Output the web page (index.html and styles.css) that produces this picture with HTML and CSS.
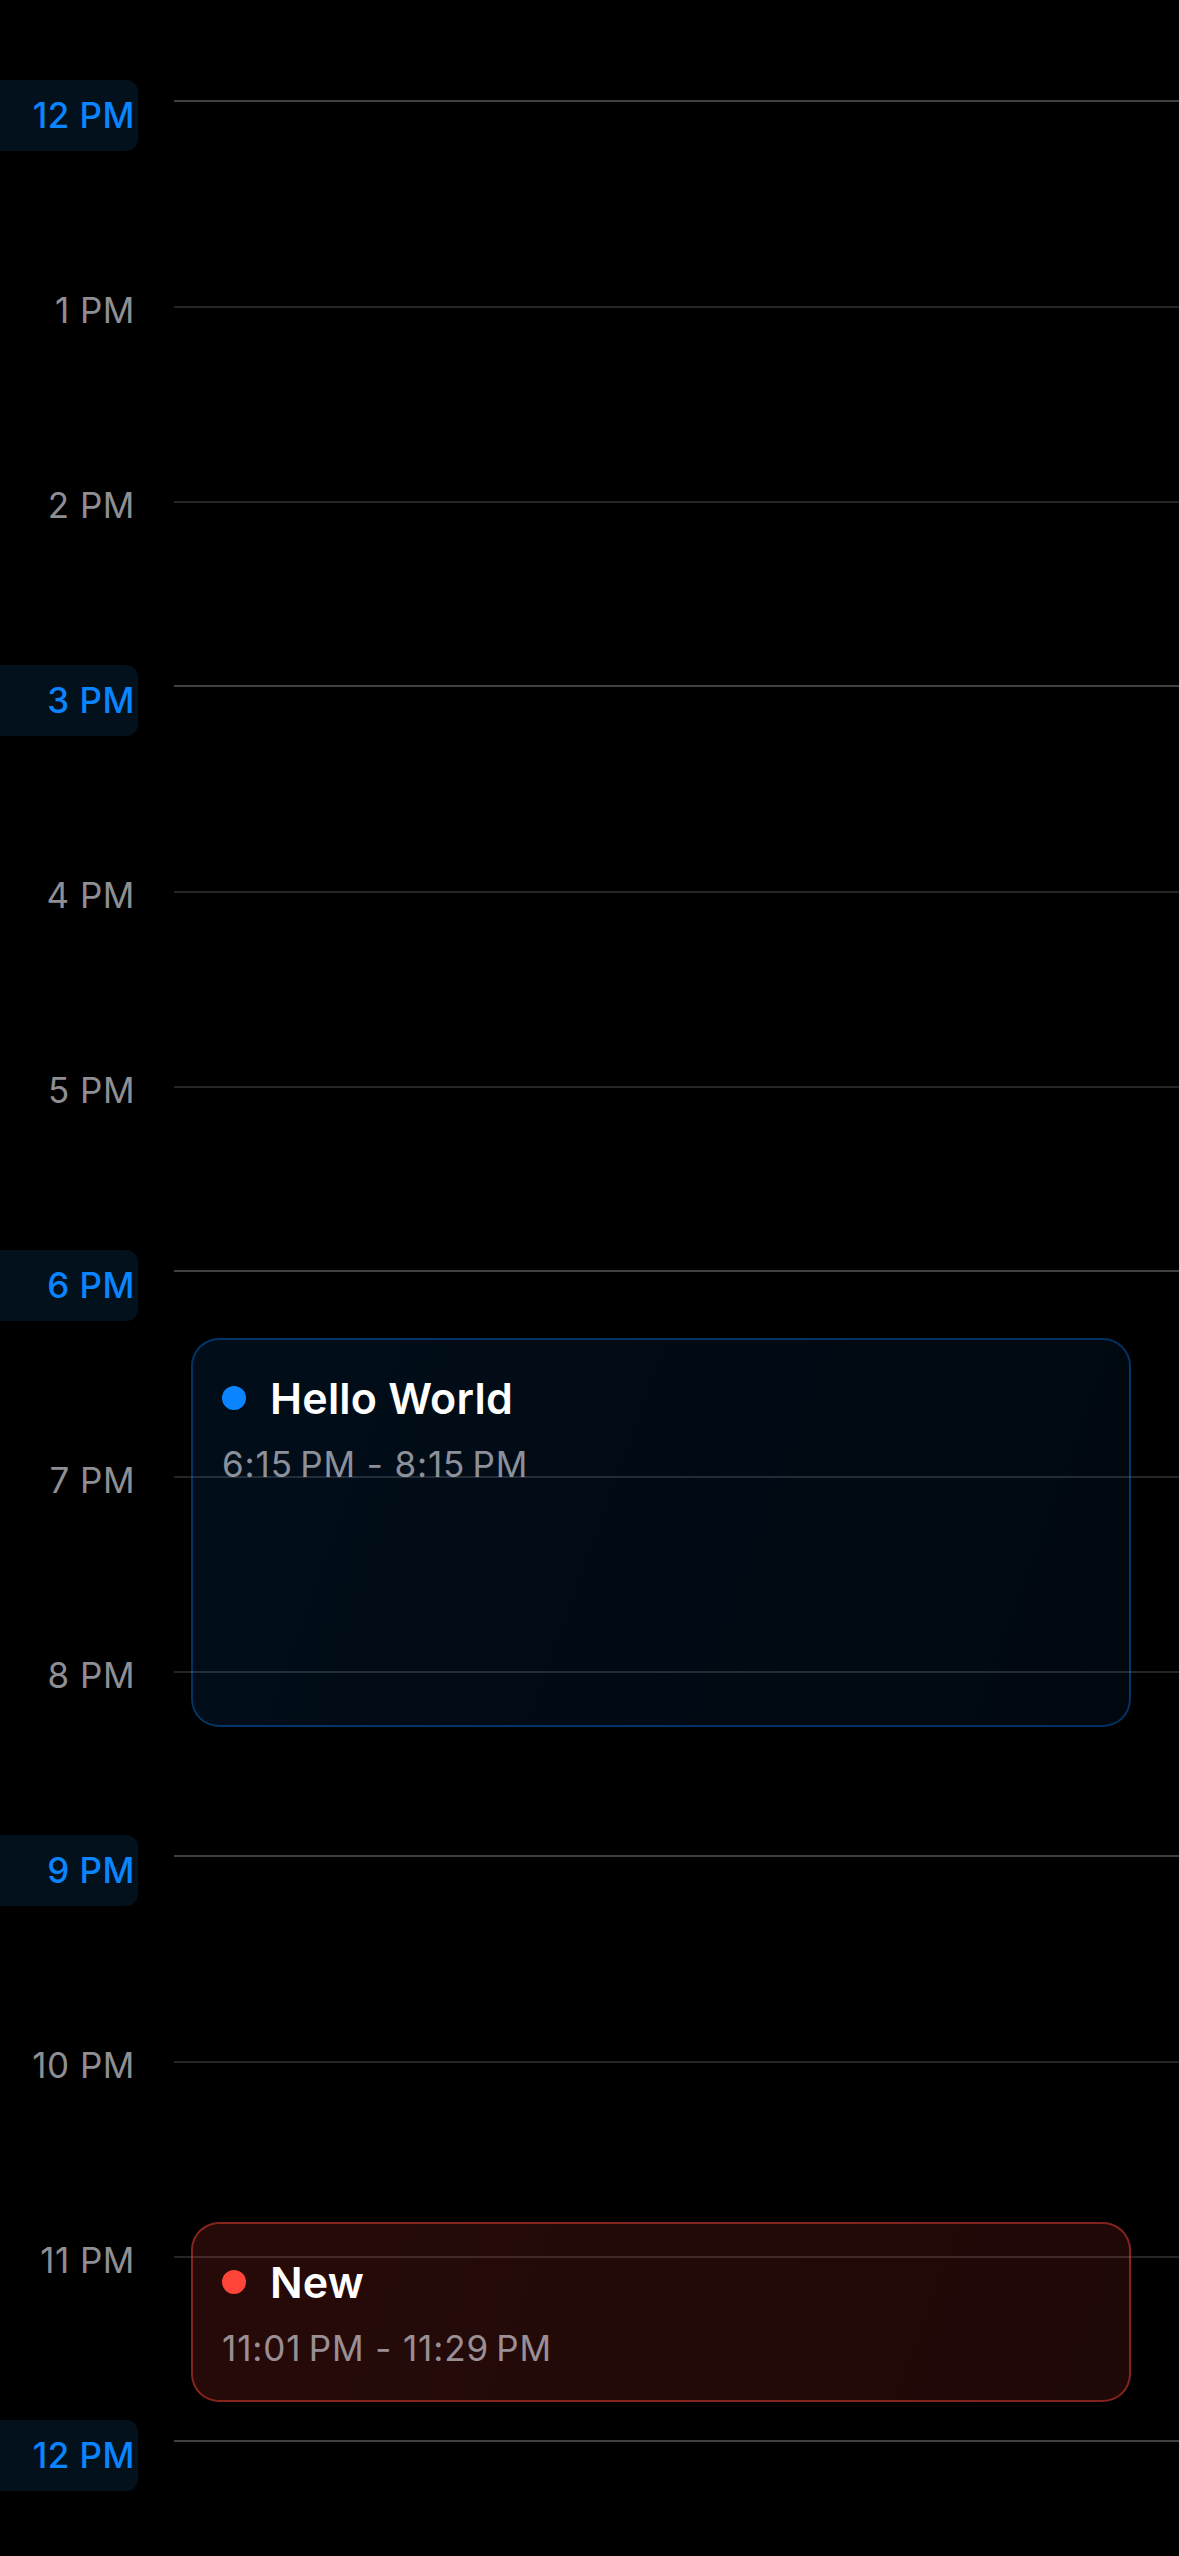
FILE: index.html
```html
<!DOCTYPE html>
<html lang="en">
<head>
  <meta charset="UTF-8">
  <title>Day</title>
  <meta name="viewport" content="width=device-width, initial-scale=1.0">
  <link rel="stylesheet" href="styles.css">
</head>
<body>

  <div class="timeline">
    <div class="hour major"><div class="label">12 PM</div><div class="rule"></div></div>
    <div class="hour"><div class="label">1 PM</div><div class="rule"></div></div>
    <div class="hour"><div class="label">2 PM</div><div class="rule"></div></div>
    <div class="hour major"><div class="label">3 PM</div><div class="rule"></div></div>
    <div class="hour"><div class="label">4 PM</div><div class="rule"></div></div>
    <div class="hour"><div class="label">5 PM</div><div class="rule"></div></div>
    <div class="hour major"><div class="label">6 PM</div><div class="rule"></div></div>
    <div class="hour"><div class="label">7 PM</div><div class="rule"></div></div>
    <div class="hour"><div class="label">8 PM</div><div class="rule"></div></div>
    <div class="hour major"><div class="label">9 PM</div><div class="rule"></div></div>
    <div class="hour"><div class="label">10 PM</div><div class="rule"></div></div>
    <div class="hour"><div class="label">11 PM</div><div class="rule"></div></div>
    <div class="hour major"><div class="label">12 PM</div><div class="rule"></div></div>

    <div class="event blue" style="top: 1338px; height: 389px;">
      <div class="event-title"><span class="dot"></span>Hello World</div>
      <div class="event-time">6:15&#8239;PM - 8:15&#8239;PM</div>
    </div>

    <div class="event red" style="top: 2222px; height: 180px;">
      <div class="event-title"><span class="dot"></span>New</div>
      <div class="event-time">11:01&#8239;PM - 11:29&#8239;PM</div>
    </div>
  </div>

</body>
</html>
```

FILE: styles.css
```css
html, body {
  background: #000;
}

body {
  font-family: Inter, "Noto Sans", sans-serif;
  color: #fff;
  margin: 0;
  height: 2556px;
  overflow: hidden;
}

.timeline {
  position: relative;
  padding-top: 17.5px;
}

.hour {
  display: flex;
  align-items: center;
  height: 195px;
}

.label {
  width: 138px;
  height: 71px;
  flex-shrink: 0;
  display: flex;
  align-items: center;
  justify-content: flex-end;
  padding-right: 3px;
  box-sizing: border-box;
  font-size: 35px;
  letter-spacing: 0.5px;
  color: #8e8e93;
}

.rule {
  flex: 1;
  height: 2px;
  margin-left: 36px;
  margin-bottom: 6px;
  background: #252525;
}

.major .label {
  background: #03111c;
  border-radius: 0 12px 12px 0;
  color: #0a84ff;
  font-weight: 550;
}

.major .rule {
  margin-bottom: 28px;
  background: #404040;
}

.event {
  position: absolute;
  left: 191px;
  width: 940px;
  box-sizing: border-box;
  border-radius: 28px;
  border: 2px solid;
  padding: 32px 29px 0;
}

.event.blue {
  background: linear-gradient(110deg, rgba(10, 132, 255, 0.1), rgba(10, 132, 255, 0.06));
  border-color: rgba(10, 132, 255, 0.34);
}

.event.red {
  background: linear-gradient(110deg, rgba(255, 69, 58, 0.15), rgba(255, 69, 58, 0.12));
  border-color: rgba(255, 69, 58, 0.45);
}

.event-title {
  display: flex;
  align-items: center;
  gap: 24px;
  height: 52px;
  font-size: 43px;
  line-height: 52px;
  font-weight: 560;
  letter-spacing: 0.2px;
}

.dot {
  width: 24px;
  height: 24px;
  border-radius: 50%;
  flex-shrink: 0;
}

.blue .dot {
  background: #0a84ff;
}

.red .dot {
  background: #ff453a;
}

.event-time {
  margin-top: 20px;
  font-size: 35px;
  line-height: 40px;
  color: rgba(235, 235, 245, 0.6);
  letter-spacing: 0.9px;
}
```
